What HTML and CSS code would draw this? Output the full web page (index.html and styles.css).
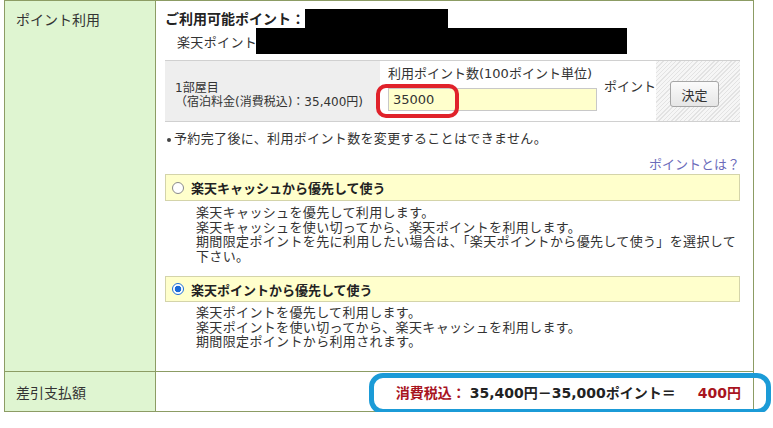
FILE: index.html
```html
<!DOCTYPE html>
<html lang="ja">
<head>
<meta charset="utf-8">
<title>ポイント利用</title>
<link rel="stylesheet" href="styles.css">
</head>
<body>
<div class="sheet">
  <div class="label l1">ポイント利用</div>
  <div class="cell c1">
    <div class="avail"><span class="avail-t">ご利用可能ポイント：</span><span class="redact ra"></span></div>
    <div class="rpt"><span>楽天ポイント</span><span class="redact rb"></span></div>
    <div class="panel">
      <div class="room"><div>1部屋目</div><div>（宿泊料金(消費税込)：35,400円)</div></div>
      <div class="entry">
        <div class="entry-col">
          <div class="entry-lbl">利用ポイント数(100ポイント単位)</div>
          <div class="pt-input">35000</div>
        </div>
        <span class="unit">ポイント</span>
        <span class="mark-red"></span>
      </div>
      <div class="act"><button class="btn" type="button">決定</button></div>
    </div>
    <p class="note"><span class="dot"></span>予約完了後に、利用ポイント数を変更することはできません。</p>
    <div class="help"><a class="link">ポイントとは？</a></div>
    <div class="opt"><span class="radio"></span><span class="opt-t">楽天キャッシュから優先して使う</span></div>
    <div class="desc">楽天キャッシュを優先して利用します。<br>楽天キャッシュを使い切ってから、楽天ポイントを利用します。<br>期間限定ポイントを先に利用したい場合は、「楽天ポイントから優先して使う」を選択して<br>下さい。</div>
    <div class="opt opt2"><span class="radio on"></span><span class="opt-t">楽天ポイントから優先して使う</span></div>
    <div class="desc desc2">楽天ポイントを優先して利用します。<br>楽天ポイントを使い切ってから、楽天キャッシュを利用します。<br>期間限定ポイントから利用されます。</div>
  </div>
  <div class="label l2">差引支払額</div>
  <div class="cell c2"><span class="red">消費税込：</span><span class="calc">35,400円－35,000ポイント＝</span><span class="red amt">400円</span></div>
  <span class="mark-blue"></span>
</div>
</body>
</html>
```
FILE: styles.css
```css
html, body {
  margin: 0;
  padding: 0;
  background: #fff;
}
body {
  font-family: "DejaVu Sans", "Noto Sans CJK JP", sans-serif;
  color: #333;
  font-size: 13px;
}
.sheet {
  position: relative;
  margin-left: 4px;
  width: 750px;
  box-sizing: border-box;
  border: 1px solid #8c9c64;
  display: grid;
  grid-template-columns: 151px 1fr;
  grid-template-rows: 371px 39px;
}
.label {
  background: #dff5d1;
  border-right: 1px solid #8c9c64;
  font-size: 14px;
  padding-left: 11px;
  color: #333;
}
.l1 {
  border-bottom: 1px solid #8c9c64;
  padding-top: 9px;
  line-height: 20px;
}
.l2 {
  display: flex;
  align-items: center;
}
.c1 {
  border-bottom: 1px solid #8c9c64;
  padding: 7px 13px 0 9px;
  letter-spacing: 0.35px;
}
.avail {
  height: 20px;
  display: flex;
  align-items: center;
  font-size: 14px;
  font-weight: bold;
  letter-spacing: 0;
  color: #222;
}
.redact {
  display: inline-block;
  background: #000;
}
.ra { width: 143px; height: 19px; }
.rpt {
  height: 26px;
  display: flex;
  align-items: center;
  padding-left: 12px;
}
.rb { width: 371px; height: 26px; margin-left: -1px; }
.panel {
  margin-top: 6px;
  height: 62px;
  box-sizing: border-box;
  border-top: 1px solid #d0d0d0;
  border-bottom: 1px solid #d0d0d0;
  display: grid;
  grid-template-columns: 215px 276px 1fr;
}
.room {
  background: #eeeeee;
  font-size: 12px;
  line-height: 14px;
  padding: 20px 0 0 10px;
  letter-spacing: 0;
}
.entry {
  position: relative;
  display: flex;
  align-items: flex-start;
  padding: 5px 0 0 8px;
  background: #fff;
}
.entry-col {
  flex: none;
  width: 209px;
}
.entry-lbl {
  line-height: 16px;
  white-space: nowrap;
  letter-spacing: 0;
}
.pt-input {
  margin-top: 6px;
  width: 209px;
  height: 23px;
  box-sizing: border-box;
  border: 1px solid #c8c8c8;
  background: #ffffcc;
  padding-left: 4px;
  line-height: 21px;
  font-size: 13px;
  letter-spacing: 0;
}
.unit {
  margin: 13px 0 0 7px;
  line-height: 16px;
  white-space: nowrap;
  letter-spacing: 0;
}
.mark-red {
  position: absolute;
  left: -4px;
  top: 23px;
  width: 83px;
  height: 34px;
  box-sizing: border-box;
  border: 4px solid #e0222b;
  border-radius: 10px;
}
.act {
  background: repeating-linear-gradient(-45deg, #e3e3e3 0 1px, #f6f6f6 1px 3px);
  padding: 20px 0 0 14px;
}
.btn {
  width: 49px;
  height: 26px;
  padding: 0;
  border: 1px solid #a6a6a6;
  border-radius: 3px;
  background: linear-gradient(#fbfbfb, #e6e6e6);
  font-family: "Noto Sans CJK JP", sans-serif;
  font-size: 13px;
  color: #333;
}
.note {
  margin: 9px 0 0;
  line-height: 16px;
  display: flex;
  align-items: center;
}
.dot {
  width: 4px;
  height: 4px;
  border-radius: 50%;
  background: #444;
  margin: 1px 3px 0 2px;
}
.help {
  margin-top: 10px;
  line-height: 16px;
  text-align: right;
}
.link {
  color: #6b6bba;
  letter-spacing: 0;
}
.opt {
  margin-top: 1px;
  height: 27px;
  box-sizing: border-box;
  border: 1px solid #d4d4aa;
  background: #ffffcc;
  display: flex;
  align-items: center;
  padding-left: 6px;
}
.opt2 {
  margin-top: 12px;
  height: 26px;
}
.radio {
  width: 12px;
  height: 12px;
  box-sizing: border-box;
  border: 1px solid #8a8a8a;
  border-radius: 50%;
  background: #fff;
  margin-right: 7px;
}
.radio.on {
  border-color: #1f6fd8;
  background: radial-gradient(circle, #1a6ad8 0 3px, #fff 3.6px);
}
.opt-t {
  font-weight: bold;
  color: #222;
  letter-spacing: 0;
}
.desc {
  margin-top: 5px;
  padding: 0 0 0 31px;
  line-height: 14.5px;
  white-space: nowrap;
}
.desc2 { margin-top: 4px; }
.c2 {
  display: flex;
  align-items: center;
  justify-content: flex-end;
  padding-right: 12px;
  font-size: 14px;
  font-weight: bold;
  color: #222;
}
.red { color: #a8141e; }
.calc { margin-left: 4px; }
.amt { margin-left: 22px; }
.mark-blue {
  position: absolute;
  left: 364px;
  top: 372px;
  width: 402px;
  height: 41px;
  box-sizing: border-box;
  border: 5px solid #1b9bd7;
  border-radius: 14px;
}
```
